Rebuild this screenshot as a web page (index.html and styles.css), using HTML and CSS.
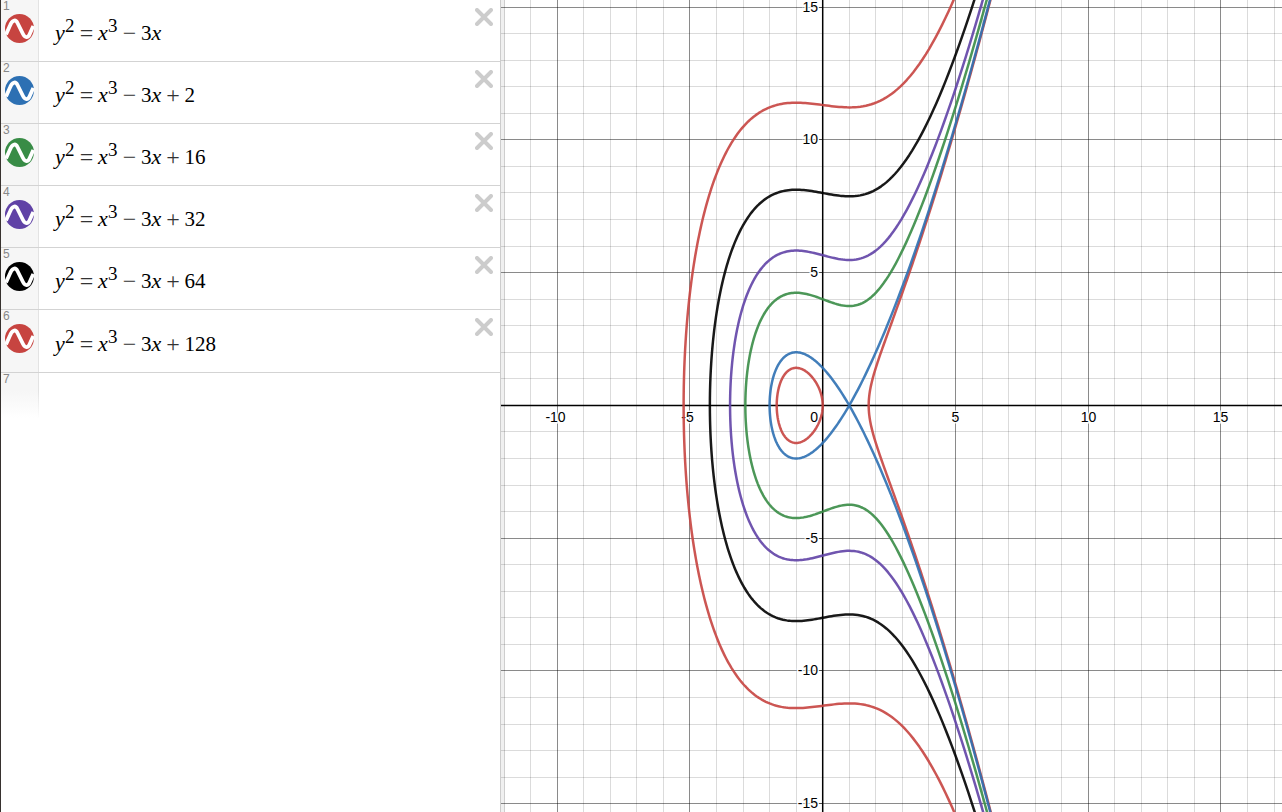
FILE: index.html
```html
<!DOCTYPE html>
<html lang="en">
<head>
<meta charset="utf-8">
<meta name="viewport" content="width=device-width, initial-scale=1">
<title>Graphing Calculator</title>
<link rel="stylesheet" href="styles.css">
</head>
<body>
<svg class="defs" aria-hidden="true">
  <symbol id="wave" viewBox="0 0 30 30">
    <circle cx="15.5" cy="14.5" r="14.5" fill="currentColor"/>
    <path d="M2 20.500 L6 11.500 C8 6 11.500 5 13.500 9 L19 20 C21 24 24 24 25.500 20.500 L29.300 12" fill="none" stroke="#fff" stroke-width="3.800"/>
  </symbol>
  <symbol id="cross" viewBox="0 0 18 18">
    <path d="M2 2 L16 16 M16 2 L2 16" stroke="currentColor" stroke-width="4" stroke-linecap="round"/>
  </symbol>
</svg>
<main class="calculator">
  <section class="expressions" aria-label="Expressions">
    <ol class="list" id="list"></ol>
  </section>
  <section class="graph" aria-label="Graph">
    <svg class="paper" id="paper" role="img" aria-label="Graph of six elliptic curves"></svg>
  </section>
</main>
<script src="script.js"></script>
</body>
</html>
```
FILE: styles.css
```css
* {
  box-sizing: border-box;
}

body {
  margin: 0;
  background: #fff;
  font-family: "Liberation Sans", Arial, sans-serif;
}

.defs {
  display: none;
}

.calculator {
  display: flex;
  height: 100vh;
  overflow: hidden;
}

.expressions {
  flex: 0 0 501px;
  border-left: 1px solid #37322f;
  border-right: 1px solid #ccc;
  overflow: hidden;
}

.list {
  margin: 0;
  padding: 0;
  list-style: none;
}

.row {
  display: flex;
  height: 62px;
  border-bottom: 1px solid #d3d3d3;
}

.row-last {
  height: 63px;
}

.row-empty {
  height: 45px;
  border-bottom: 0;
}

.tab {
  flex: 0 0 38px;
  display: flex;
  flex-direction: column;
  padding-left: 2px;
  background: #f6f6f6;
  border-right: 1px solid #e3e3e3;
}

.row-empty .tab {
  background: linear-gradient(#f6f6f6 40%, #fff);
  border-image: linear-gradient(#e3e3e3 40%, #fff) 1;
}

.number {
  height: 14px;
  font-size: 12px;
  line-height: 13px;
  color: #888;
}

.toggle,
.remove {
  display: block;
  padding: 0;
  border: 0;
  background: none;
  cursor: pointer;
}

.toggle {
  width: 30px;
  height: 30px;
  margin-left: 1px;
}

.toggle svg,
.remove svg {
  display: block;
  width: 100%;
  height: 100%;
}

.math {
  flex: 1;
  display: flex;
  align-items: center;
  padding: 5px 0 0 16px;
  font-family: "Liberation Serif", "Times New Roman", serif;
  font-size: 21px;
  line-height: 28px;
  color: #000;
}

.math i {
  width: 10px;
  font-size: 22px;
}

.math sup {
  width: 10px;
  padding-bottom: 14px;
  font-size: 19px;
  line-height: 20px;
}

.op {
  width: 23px;
  font-size: 24px;
  text-align: center;
  color: #333;
}

.remove {
  width: 18px;
  height: 18px;
  margin: 8px 7px 0 0;
  color: #ccc;
}

.graph {
  flex: 1;
  min-width: 0;
  box-shadow: inset 4px 0 0 #f0f0f0;
}

.paper {
  display: block;
  width: 100%;
  height: 100%;
}

.minor,
.major {
  stroke: #000;
  shape-rendering: crispEdges;
}

.minor {
  stroke-opacity: 0.14;
}

.major {
  stroke-opacity: 0.46;
}

.axis {
  stroke: #000;
  stroke-width: 1.500;
}

.curve {
  fill: none;
  stroke-width: 2.500;
  stroke-opacity: 0.9;
  stroke-linejoin: round;
}

.label {
  font-family: "Liberation Sans", Arial, sans-serif;
  font-size: 14px;
  fill: #000;
  stroke: #fff;
  stroke-width: 3px;
  stroke-opacity: 0.9;
  paint-order: stroke;
}
```
FILE: script.js
```js
const curves = [
  { c: 0, color: '#c74440' },
  { c: 2, color: '#2d70b3' },
  { c: 16, color: '#388c46' },
  { c: 32, color: '#6042a6' },
  { c: 64, color: '#000000' },
  { c: 128, color: '#c74440' }
];

const list = document.getElementById('list');
const op = (s) => `<span class="op">${s}</span>`;

list.innerHTML = curves.map(({ c, color }, i) => `
  <li class="row${i === curves.length - 1 ? ' row-last' : ''}">
    <div class="tab">
      <span class="number">${i + 1}</span>
      <button class="toggle" type="button" aria-label="Toggle curve ${i + 1}" style="color:${color}"><svg><use href="#wave"/></svg></button>
    </div>
    <div class="math"><i>y</i><sup>2</sup>${op('=')}<i>x</i><sup>3</sup>${op('−')}<span>3</span><i>x</i>${c ? op('+') + `<span>${c}</span>` : ''}</div>
    <button class="remove" type="button" aria-label="Delete expression ${i + 1}"><svg><use href="#cross"/></svg></button>
  </li>`).join('') +
  `<li class="row row-empty"><div class="tab"><span class="number">${curves.length + 1}</span></div></li>`;

const paper = document.getElementById('paper');
const UNIT = 26.55;

function realRoot(c) {
  let lo = -10;
  let hi = -1;
  for (let i = 0; i < 60; i++) {
    const mid = (lo + hi) / 2;
    if (mid ** 3 - 3 * mid + c < 0) lo = mid;
    else hi = mid;
  }
  return hi;
}

// Points of y^2 = x^3 - 3x + c; x = root + t^2 keeps the vertical tangent smooth.
function branches(c) {
  const height = (x) => Math.sqrt(Math.max(0, x ** 3 - 3 * x + c));
  const open = (root, yOf) => {
    const points = [];
    for (let t = -3.6; t <= 3.6; t += 0.02) {
      const x = root + t * t;
      points.push([x, yOf(t, x)]);
    }
    return points;
  };
  if (c === 2) return [open(-2, (t) => t * (t * t - 3))];
  const signed = (t, x) => Math.sign(t) * height(x);
  if (c > 2) return [open(realRoot(c), signed)];
  const r = Math.sqrt(3);
  const oval = [];
  for (let k = 0; k <= 180; k++) {
    const a = k * Math.PI / 90;
    const x = -r / 2 + r / 2 * Math.cos(a);
    oval.push([x, Math.sign(Math.sin(a)) * height(x)]);
  }
  return [oval, open(r, signed)];
}

function draw() {
  const { width, height } = paper.getBoundingClientRect();
  const ox = width / 2 - 68.8;
  const oy = height / 2 - 0.6;
  const px = (x) => ox + x * UNIT;
  const py = (y) => oy - y * UNIT;
  const line = (cls, x1, y1, x2, y2) => `<line class="${cls}" x1="${x1}" y1="${y1}" x2="${x2}" y2="${y2}"/>`;
  const snap = (v) => Math.floor(v) + 0.5;
  let grid = '';
  let labels = '';
  const text = (anchor, x, y, s) => `<text class="label" text-anchor="${anchor}" x="${x}" y="${Math.round(y)}">${s}</text>`;

  for (let n = Math.ceil(-ox / UNIT); px(n) < width; n++) {
    if (n === 0) continue;
    const x = snap(px(n));
    grid += line(n % 5 ? 'minor' : 'major', x, 0, x, height);
    if (n % 5 === 0) labels += text('middle', n < 0 ? x - 2 : x, oy + 16.2, n);
  }
  for (let n = Math.ceil((oy - height) / UNIT); py(n) > 0; n++) {
    if (n === 0) continue;
    const y = snap(py(n));
    grid += line(n % 5 ? 'minor' : 'major', 0, y, width, y);
    if (n % 5 === 0) labels += text('end', Math.floor(ox) - 4, y + 4, n) + line('major', ox - 4, y, ox, y);
  }
  labels += text('end', Math.floor(ox) - 4, oy + 16.2, 0);
  const axes = line('axis', 0, oy, width, oy) + line('axis', ox, 0, ox, height);
  const paths = curves.map(({ c, color }) => branches(c).map((points) => {
    const d = points.map(([x, y]) => `${px(x).toFixed(2)} ${py(y).toFixed(2)}`).join('L');
    return `<path class="curve" stroke="${color}" d="M${d}"/>`;
  }).join('')).join('');
  paper.innerHTML = grid + axes + labels + paths;
}

draw();
window.addEventListener('resize', draw);
```
